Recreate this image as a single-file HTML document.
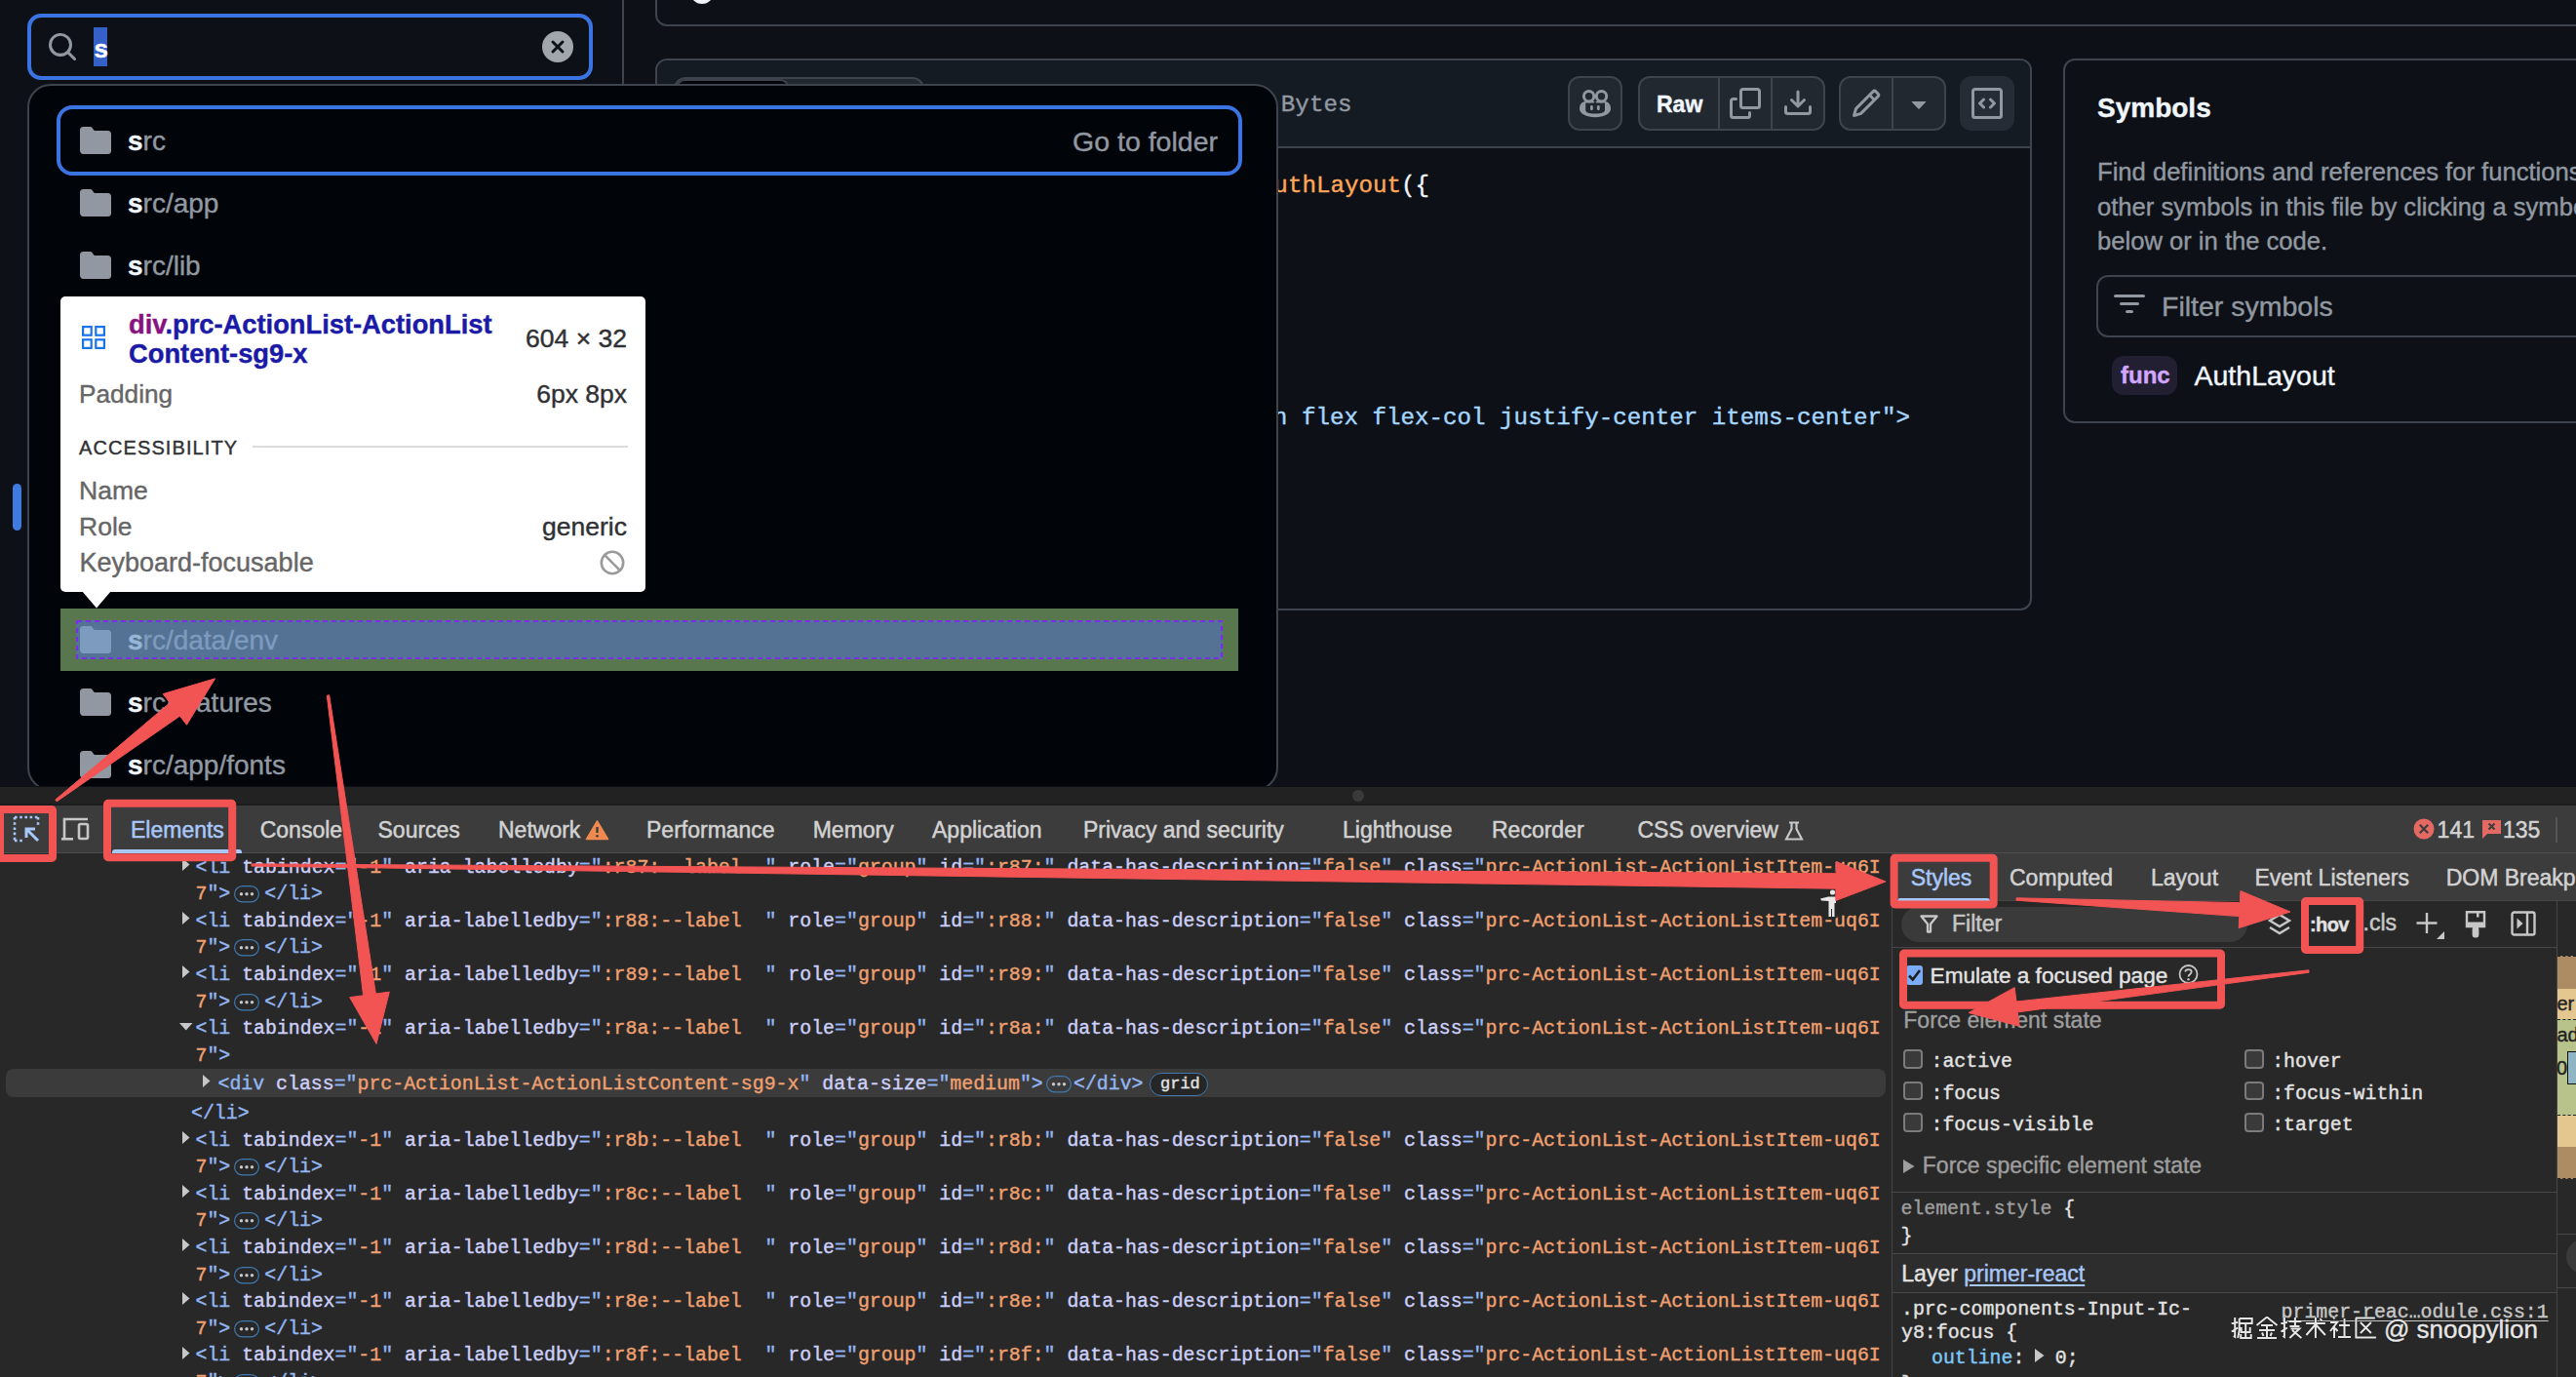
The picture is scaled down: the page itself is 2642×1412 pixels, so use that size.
<!DOCTYPE html>
<html><head><meta charset="utf-8"><title>DevTools</title>
<style>
*{box-sizing:border-box;margin:0;padding:0}
html,body{width:2642px;height:1412px;overflow:hidden;background:#0d1117}
body{position:relative;font-family:"Liberation Sans",sans-serif}
.a{position:absolute}
.t{position:absolute;white-space:pre;line-height:1;-webkit-text-stroke:0.4px currentColor}
svg{position:absolute;overflow:visible}
</style></head>
<body>
<div class="a" style="left:0;top:0;width:2642px;height:806px;background:#0d1117;overflow:hidden"><div class="a" style="left:638px;top:0;width:2px;height:806px;background:#3d444d"></div><div class="a" style="left:672px;top:-80px;width:2100px;height:107px;border:2px solid #3d444d;border-radius:12px"></div><div class="a" style="left:708px;top:-20px;width:24px;height:24px;border-radius:50%;background:#f0f6fc"></div><div class="a" style="left:672px;top:60px;width:1412px;height:566px;border:2px solid #3d444d;border-radius:12px;background:#0d1117;overflow:hidden"></div><div class="a" style="left:674px;top:62px;width:1408px;height:89px;background:#151b23;border-radius:10px 10px 0 0"></div><div class="a" style="left:674px;top:150px;width:1408px;height:2px;background:#3d444d"></div><div class="a" style="left:691px;top:79px;width:257px;height:56px;border:2px solid #3d444d;border-radius:12px;background:#212830"></div><div class="a" style="left:693px;top:81px;width:117px;height:52px;border-radius:10px;background:#010409;border:2px solid #3d444d"></div><div class="t" style="left:965.5px;top:96.1px;font-size:24.2px;color:#9198a1;font-weight:400;font-family:'Liberation Mono', monospace;">28 lines (25 loc) · 789 Bytes</div><div class="a" style="left:1608px;top:78px;width:56px;height:56px;border:2px solid #3d444d;border-radius:12px;background:#212830"></div><svg style="left:1619px;top:91px" width="34" height="30" viewBox="0 0 34 30">
<path fill="#9198a1" d="M1 20.5 C1 16 3.5 13.3 7 13 L27 13 C30.5 13.3 33 16 33 20.5 C33 25.6 26 29.2 17 29.2 C8 29.2 1 25.6 1 20.5 Z"/>
<path fill="#212830" d="M7.2 14.6 H15.5 L17 12.8 L18.5 14.6 H27 V21.5 C27 24 24.5 25.6 17 25.6 C9.5 25.6 7.2 24 7.2 21.5 Z"/>
<circle cx="10.6" cy="7.8" r="5.2" fill="none" stroke="#9198a1" stroke-width="3"/><circle cx="23.5" cy="7.8" r="5.2" fill="none" stroke="#9198a1" stroke-width="3"/>
<rect x="12" y="17.1" width="2.8" height="5.1" rx="1.4" fill="#9198a1"/><rect x="18.9" y="17.1" width="2.8" height="5.1" rx="1.4" fill="#9198a1"/>
</svg><div class="a" style="left:1680px;top:78px;width:192px;height:56px;border:2px solid #3d444d;border-radius:12px;background:#212830"></div><div class="a" style="left:1762px;top:80px;width:2px;height:52px;background:#3d444d"></div><div class="a" style="left:1816px;top:80px;width:2px;height:52px;background:#3d444d"></div><div class="t" style="left:1699.0px;top:96.1px;font-size:23px;color:#f0f6fc;font-weight:700;font-family:'Liberation Sans', sans-serif;">Raw</div><svg style="left:1774px;top:90px" width="32" height="32" viewBox="0 0 16 16"><path fill="#9198a1" d="M0 6.75C0 5.784.784 5 1.75 5h1.5a.75.75 0 0 1 0 1.5h-1.5a.25.25 0 0 0-.25.25v7.5c0 .138.112.25.25.25h7.5a.25.25 0 0 0 .25-.25v-1.5a.75.75 0 0 1 1.5 0v1.5A1.75 1.75 0 0 1 9.25 16h-7.5A1.75 1.75 0 0 1 0 14.25ZM5 1.75C5 .784 5.784 0 6.75 0h7.5C15.216 0 16 .784 16 1.75v7.5A1.75 1.75 0 0 1 14.25 11h-7.5A1.75 1.75 0 0 1 5 9.25Zm1.75-.25a.25.25 0 0 0-.25.25v7.5c0 .138.112.25.25.25h7.5a.25.25 0 0 0 .25-.25v-7.5a.25.25 0 0 0-.25-.25Z"/></svg><svg style="left:1828px;top:90px" width="32" height="32" viewBox="0 0 16 16"><path fill="#9198a1" d="M2.75 14A1.75 1.75 0 0 1 1 12.25v-2.5a.75.75 0 0 1 1.5 0v2.5c0 .138.112.25.25.25h10.5a.25.25 0 0 0 .25-.25v-2.5a.75.75 0 0 1 1.5 0v2.5A1.75 1.75 0 0 1 13.25 14ZM7.25 7.689V2a.75.75 0 0 1 1.5 0v5.689l1.97-1.969a.749.749 0 1 1 1.06 1.06l-3.25 3.25a.749.749 0 0 1-1.06 0L4.22 6.78a.749.749 0 1 1 1.06-1.06l1.97 1.969Z"/></svg><div class="a" style="left:1886px;top:78px;width:110px;height:56px;border:2px solid #3d444d;border-radius:12px;background:#212830"></div><div class="a" style="left:1940px;top:80px;width:2px;height:52px;background:#3d444d"></div><svg style="left:1898px;top:90px" width="32" height="32" viewBox="0 0 16 16"><path fill="#9198a1" d="M11.013 1.427a1.75 1.75 0 0 1 2.474 0l1.086 1.086a1.75 1.75 0 0 1 0 2.474l-8.61 8.61c-.21.21-.47.364-.756.445l-3.251.93a.75.75 0 0 1-.927-.928l.929-3.25c.081-.286.235-.547.445-.758l8.61-8.61Zm.176 4.823L9.75 4.81l-6.286 6.287a.253.253 0 0 0-.064.108l-.558 1.953 1.953-.558a.253.253 0 0 0 .108-.064Zm1.238-3.763a.25.25 0 0 0-.354 0L10.811 3.75l1.439 1.44 1.263-1.263a.25.25 0 0 0 0-.354Z"/></svg><svg style="left:1952px;top:90px" width="32" height="32" viewBox="0 0 16 16"><path fill="#9198a1" d="m4.427 7.427 3.396 3.396a.25.25 0 0 0 .354 0l3.396-3.396A.25.25 0 0 0 11.396 7H4.604a.25.25 0 0 0-.177.427Z"/></svg><div class="a" style="left:2010px;top:78px;width:56px;height:56px;border-radius:12px;background:#262c36"></div><svg style="left:2022px;top:90px" width="32" height="32" viewBox="0 0 16 16"><path fill="#9198a1" d="M0 1.75C0 .784.784 0 1.75 0h12.5C15.216 0 16 .784 16 1.75v12.5A1.75 1.75 0 0 1 14.25 16H1.75A1.75 1.75 0 0 1 0 14.25Zm1.75-.25a.25.25 0 0 0-.25.25v12.5c0 .138.112.25.25.25h12.5a.25.25 0 0 0 .25-.25V1.75a.25.25 0 0 0-.25-.25Zm7.47 3.97a.75.75 0 0 1 1.06 0l2 2a.75.75 0 0 1 0 1.06l-2 2a.749.749 0 0 1-1.275-.326.749.749 0 0 1 .215-.734L10.69 8 9.22 6.53a.75.75 0 0 1 0-1.06ZM6.78 6.53 5.31 8l1.47 1.47a.749.749 0 0 1-.326 1.275.749.749 0 0 1-.734-.215l-2-2a.75.75 0 0 1 0-1.06l2-2a.751.751 0 0 1 1.042.018.751.751 0 0 1 .018 1.042Z"/></svg><div class="t" style="left:943.5px;top:178.5px;font-size:24.2px;color:#f0f6fc;font-weight:400;font-family:'Liberation Mono', monospace;"><span style="color:#ff7b72;">export default function </span><span style="color:#ffa657;">AuthLayout</span><span style="color:#f0f6fc;">({</span></div><div class="t" style="left:855.9px;top:417.1px;font-size:24.2px;color:#f0f6fc;font-weight:400;font-family:'Liberation Mono', monospace;"><span style="color:#a5d6ff;">    &lt;div className="min-h-scree</span><span style="color:#a5d6ff;">n flex flex-col justify-center items-center"&gt;</span></div><div class="a" style="left:2116px;top:60px;width:700px;height:374px;border:2px solid #3d444d;border-radius:12px"></div><div class="t" style="left:2151.0px;top:97.3px;font-size:28px;color:#f0f6fc;font-weight:700;font-family:'Liberation Sans', sans-serif;">Symbols</div><div class="t" style="left:2151.0px;top:163.8px;font-size:25.6px;color:#9198a1;font-weight:400;font-family:'Liberation Sans', sans-serif;">Find definitions and references for functions and</div><div class="t" style="left:2151.0px;top:199.6px;font-size:25.6px;color:#9198a1;font-weight:400;font-family:'Liberation Sans', sans-serif;">other symbols in this file by clicking a symbol</div><div class="t" style="left:2151.0px;top:235.4px;font-size:25.6px;color:#9198a1;font-weight:400;font-family:'Liberation Sans', sans-serif;">below or in the code.</div><div class="a" style="left:2150px;top:282px;width:600px;height:64px;border:2px solid #3d444d;border-radius:12px"></div><svg style="left:2168px;top:296px" width="32" height="32" viewBox="0 0 16 16"><path fill="#9198a1" d="M.75 3h14.5a.75.75 0 0 1 0 1.5H.75a.75.75 0 0 1 0-1.5ZM3 7.75A.75.75 0 0 1 3.75 7h8.5a.75.75 0 0 1 0 1.5h-8.5A.75.75 0 0 1 3 7.75Zm3 4a.75.75 0 0 1 .75-.75h2.5a.75.75 0 0 1 0 1.5h-2.5a.75.75 0 0 1-.75-.75Z"/></svg><div class="t" style="left:2217.0px;top:300.4px;font-size:28.5px;color:#9198a1;font-weight:400;font-family:'Liberation Sans', sans-serif;">Filter symbols</div><div class="a" style="left:2166px;top:365px;width:67px;height:40px;border-radius:12px;background:#231f33"></div><div class="t" style="left:2175.0px;top:373.2px;font-size:24px;color:#d2a8ff;font-weight:700;font-family:'Liberation Sans', sans-serif;">func</div><div class="t" style="left:2250.5px;top:370.9px;font-size:28.5px;color:#f0f6fc;font-weight:400;font-family:'Liberation Sans', sans-serif;">AuthLayout</div><div class="a" style="left:28px;top:14px;width:580px;height:68px;border:4px solid #3a74e2;border-radius:14px;background:#0d1117"></div><svg style="left:48px;top:32px" width="32" height="32" viewBox="0 0 16 16"><path fill="#9198a1" d="M10.68 11.74a6 6 0 0 1-7.922-8.982 6 6 0 0 1 8.982 7.922l3.04 3.04a.749.749 0 0 1-.326 1.275.749.749 0 0 1-.734-.215ZM11.5 7a4.499 4.499 0 1 0-8.997 0A4.499 4.499 0 0 0 11.5 7Z"/></svg><div class="a" style="left:96px;top:28px;width:14px;height:40px;background:#3560c8"></div><div class="t" style="left:96.5px;top:37.0px;font-size:26px;color:#ffffff;font-weight:700;font-family:'Liberation Sans', sans-serif;">s</div><svg style="left:556px;top:32px" width="32" height="32" viewBox="0 0 32 32"><circle cx="16" cy="16" r="16" fill="#a1a6ad"/>
<path d="M11 11 L21 21 M21 11 L11 21" stroke="#0d1117" stroke-width="3" stroke-linecap="round"/></svg><div class="a" style="left:13px;top:496px;width:9px;height:48px;border-radius:5px;background:#3f7ae0"></div><div class="a" style="left:28px;top:86px;width:1283px;height:725px;border:2px solid #3d444d;border-radius:24px;background:#010409"></div><div class="a" style="left:58px;top:108px;width:1216px;height:72px;border:4px solid #3a74e2;border-radius:16px"></div><svg style="left:82px;top:128px" width="32" height="32" viewBox="0 0 16 16"><path fill="#9198a1" d="M1.75 1A1.75 1.75 0 0 0 0 2.75v10.5C0 14.216.784 15 1.75 15h12.5A1.75 1.75 0 0 0 16 13.25v-8.5A1.75 1.75 0 0 0 14.25 3H7.5a.25.25 0 0 1-.2-.1l-.9-1.2C6.07 1.26 5.55 1 5 1H1.75Z"/></svg><div class="t" style="left:131.0px;top:131.3px;font-size:28px;color:#9198a1;font-weight:400;font-family:'Liberation Sans', sans-serif;"><span style="color:#f0f6fc;font-weight:700">s</span><span style="color:#9198a1;">rc</span></div><svg style="left:82px;top:192px" width="32" height="32" viewBox="0 0 16 16"><path fill="#9198a1" d="M1.75 1A1.75 1.75 0 0 0 0 2.75v10.5C0 14.216.784 15 1.75 15h12.5A1.75 1.75 0 0 0 16 13.25v-8.5A1.75 1.75 0 0 0 14.25 3H7.5a.25.25 0 0 1-.2-.1l-.9-1.2C6.07 1.26 5.55 1 5 1H1.75Z"/></svg><div class="t" style="left:131.0px;top:195.3px;font-size:28px;color:#9198a1;font-weight:400;font-family:'Liberation Sans', sans-serif;"><span style="color:#f0f6fc;font-weight:700">s</span><span style="color:#9198a1;">rc/app</span></div><svg style="left:82px;top:256px" width="32" height="32" viewBox="0 0 16 16"><path fill="#9198a1" d="M1.75 1A1.75 1.75 0 0 0 0 2.75v10.5C0 14.216.784 15 1.75 15h12.5A1.75 1.75 0 0 0 16 13.25v-8.5A1.75 1.75 0 0 0 14.25 3H7.5a.25.25 0 0 1-.2-.1l-.9-1.2C6.07 1.26 5.55 1 5 1H1.75Z"/></svg><div class="t" style="left:131.0px;top:259.3px;font-size:28px;color:#9198a1;font-weight:400;font-family:'Liberation Sans', sans-serif;"><span style="color:#f0f6fc;font-weight:700">s</span><span style="color:#9198a1;">rc/lib</span></div><svg style="left:82px;top:320px" width="32" height="32" viewBox="0 0 16 16"><path fill="#9198a1" d="M1.75 1A1.75 1.75 0 0 0 0 2.75v10.5C0 14.216.784 15 1.75 15h12.5A1.75 1.75 0 0 0 16 13.25v-8.5A1.75 1.75 0 0 0 14.25 3H7.5a.25.25 0 0 1-.2-.1l-.9-1.2C6.07 1.26 5.55 1 5 1H1.75Z"/></svg><div class="t" style="left:131.0px;top:323.3px;font-size:28px;color:#9198a1;font-weight:400;font-family:'Liberation Sans', sans-serif;"><span style="color:#f0f6fc;font-weight:700">s</span><span style="color:#9198a1;">rc/components</span></div><svg style="left:82px;top:384px" width="32" height="32" viewBox="0 0 16 16"><path fill="#9198a1" d="M1.75 1A1.75 1.75 0 0 0 0 2.75v10.5C0 14.216.784 15 1.75 15h12.5A1.75 1.75 0 0 0 16 13.25v-8.5A1.75 1.75 0 0 0 14.25 3H7.5a.25.25 0 0 1-.2-.1l-.9-1.2C6.07 1.26 5.55 1 5 1H1.75Z"/></svg><div class="t" style="left:131.0px;top:387.3px;font-size:28px;color:#9198a1;font-weight:400;font-family:'Liberation Sans', sans-serif;"><span style="color:#f0f6fc;font-weight:700">s</span><span style="color:#9198a1;">rc/hooks</span></div><svg style="left:82px;top:448px" width="32" height="32" viewBox="0 0 16 16"><path fill="#9198a1" d="M1.75 1A1.75 1.75 0 0 0 0 2.75v10.5C0 14.216.784 15 1.75 15h12.5A1.75 1.75 0 0 0 16 13.25v-8.5A1.75 1.75 0 0 0 14.25 3H7.5a.25.25 0 0 1-.2-.1l-.9-1.2C6.07 1.26 5.55 1 5 1H1.75Z"/></svg><div class="t" style="left:131.0px;top:451.3px;font-size:28px;color:#9198a1;font-weight:400;font-family:'Liberation Sans', sans-serif;"><span style="color:#f0f6fc;font-weight:700">s</span><span style="color:#9198a1;">rc/data</span></div><svg style="left:82px;top:512px" width="32" height="32" viewBox="0 0 16 16"><path fill="#9198a1" d="M1.75 1A1.75 1.75 0 0 0 0 2.75v10.5C0 14.216.784 15 1.75 15h12.5A1.75 1.75 0 0 0 16 13.25v-8.5A1.75 1.75 0 0 0 14.25 3H7.5a.25.25 0 0 1-.2-.1l-.9-1.2C6.07 1.26 5.55 1 5 1H1.75Z"/></svg><div class="t" style="left:131.0px;top:515.3px;font-size:28px;color:#9198a1;font-weight:400;font-family:'Liberation Sans', sans-serif;"><span style="color:#f0f6fc;font-weight:700">s</span><span style="color:#9198a1;">rc/styles</span></div><svg style="left:82px;top:576px" width="32" height="32" viewBox="0 0 16 16"><path fill="#9198a1" d="M1.75 1A1.75 1.75 0 0 0 0 2.75v10.5C0 14.216.784 15 1.75 15h12.5A1.75 1.75 0 0 0 16 13.25v-8.5A1.75 1.75 0 0 0 14.25 3H7.5a.25.25 0 0 1-.2-.1l-.9-1.2C6.07 1.26 5.55 1 5 1H1.75Z"/></svg><div class="t" style="left:131.0px;top:579.3px;font-size:28px;color:#9198a1;font-weight:400;font-family:'Liberation Sans', sans-serif;"><span style="color:#f0f6fc;font-weight:700">s</span><span style="color:#9198a1;">rc/utils</span></div><svg style="left:82px;top:640px" width="32" height="32" viewBox="0 0 16 16"><path fill="#9198a1" d="M1.75 1A1.75 1.75 0 0 0 0 2.75v10.5C0 14.216.784 15 1.75 15h12.5A1.75 1.75 0 0 0 16 13.25v-8.5A1.75 1.75 0 0 0 14.25 3H7.5a.25.25 0 0 1-.2-.1l-.9-1.2C6.07 1.26 5.55 1 5 1H1.75Z"/></svg><div class="t" style="left:131.0px;top:643.3px;font-size:28px;color:#9198a1;font-weight:400;font-family:'Liberation Sans', sans-serif;"><span style="color:#f0f6fc;font-weight:700">s</span><span style="color:#9198a1;">rc/data/env</span></div><svg style="left:82px;top:704px" width="32" height="32" viewBox="0 0 16 16"><path fill="#9198a1" d="M1.75 1A1.75 1.75 0 0 0 0 2.75v10.5C0 14.216.784 15 1.75 15h12.5A1.75 1.75 0 0 0 16 13.25v-8.5A1.75 1.75 0 0 0 14.25 3H7.5a.25.25 0 0 1-.2-.1l-.9-1.2C6.07 1.26 5.55 1 5 1H1.75Z"/></svg><div class="t" style="left:131.0px;top:707.3px;font-size:28px;color:#9198a1;font-weight:400;font-family:'Liberation Sans', sans-serif;"><span style="color:#f0f6fc;font-weight:700">s</span><span style="color:#9198a1;">rc/features</span></div><svg style="left:82px;top:768px" width="32" height="32" viewBox="0 0 16 16"><path fill="#9198a1" d="M1.75 1A1.75 1.75 0 0 0 0 2.75v10.5C0 14.216.784 15 1.75 15h12.5A1.75 1.75 0 0 0 16 13.25v-8.5A1.75 1.75 0 0 0 14.25 3H7.5a.25.25 0 0 1-.2-.1l-.9-1.2C6.07 1.26 5.55 1 5 1H1.75Z"/></svg><div class="t" style="left:131.0px;top:771.3px;font-size:28px;color:#9198a1;font-weight:400;font-family:'Liberation Sans', sans-serif;"><span style="color:#f0f6fc;font-weight:700">s</span><span style="color:#9198a1;">rc/app/fonts</span></div><div class="t" style="right:1393.0px;top:130.9px;font-size:28.5px;color:#9198a1;font-weight:400;font-family:'Liberation Sans', sans-serif;">Go to folder</div><div class="a" style="left:62px;top:624px;width:1208px;height:64px;border-style:solid;border-width:12px 16px;border-color:rgba(147,196,125,0.6)"></div><div class="a" style="left:78px;top:636px;width:1176px;height:40px;background:rgba(117,156,201,0.72)"></div><svg style="left:78px;top:636px" width="1176" height="40"><rect x="1" y="1" width="1174" height="38" fill="none" stroke="#7a2cf0" stroke-width="2.2" stroke-dasharray="5 4"/></svg><div class="a" style="left:62px;top:304px;width:600px;height:303px;background:#ffffff;border-radius:5px;box-shadow:0 1px 4px rgba(0,0,0,.3)"></div><svg style="left:84px;top:606px" width="30" height="18"><path d="M0 0 L30 0 L15 17.5 Z" fill="#ffffff"/></svg><svg style="left:84px;top:334px" width="24" height="24" viewBox="0 0 24 24" fill="none" stroke="#1a73e8" stroke-width="2.2">
<rect x="1.1" y="1.1" width="8.6" height="8.6"/><rect x="14.3" y="1.1" width="8.6" height="8.6"/><rect x="1.1" y="14.3" width="8.6" height="8.6"/><rect x="14.3" y="14.3" width="8.6" height="8.6"/></svg><div class="t" style="left:132.0px;top:318.9px;font-size:27.3px;color:#1a1aa6;font-weight:700;font-family:'Liberation Sans', sans-serif;"><span style="color:#881280;">div</span><span style="color:#1a1aa6;">.prc-ActionList-ActionList</span></div><div class="t" style="left:132.0px;top:348.5px;font-size:27.3px;color:#1a1aa6;font-weight:700;font-family:'Liberation Sans', sans-serif;">Content-sg9-x</div><div class="t" style="right:1999.0px;top:334.4px;font-size:26.5px;color:#303134;font-weight:400;font-family:'Liberation Sans', sans-serif;">604 × 32</div><div class="t" style="left:81.0px;top:391.4px;font-size:26.2px;color:#666666;font-weight:400;font-family:'Liberation Sans', sans-serif;">Padding</div><div class="t" style="right:1999.0px;top:391.2px;font-size:26.5px;color:#303134;font-weight:400;font-family:'Liberation Sans', sans-serif;">6px 8px</div><div class="t" style="left:81.0px;top:448.8px;font-size:20px;color:#303134;font-weight:400;font-family:'Liberation Sans', sans-serif;letter-spacing:1.1px;">ACCESSIBILITY</div><div class="a" style="left:259px;top:457px;width:385px;height:2px;background:#dadce0"></div><div class="t" style="left:81.0px;top:489.5px;font-size:26.5px;color:#666666;font-weight:400;font-family:'Liberation Sans', sans-serif;">Name</div><div class="t" style="left:81.0px;top:527.4px;font-size:26.5px;color:#666666;font-weight:400;font-family:'Liberation Sans', sans-serif;">Role</div><div class="t" style="right:1999.0px;top:527.3px;font-size:26.5px;color:#303134;font-weight:400;font-family:'Liberation Sans', sans-serif;">generic</div><div class="t" style="left:81.5px;top:564.1px;font-size:27px;color:#666666;font-weight:400;font-family:'Liberation Sans', sans-serif;">Keyboard-focusable</div><svg style="left:615px;top:564px" width="26" height="26" viewBox="0 0 26 26" fill="none" stroke="#9a9a9a" stroke-width="2.6">
<circle cx="13" cy="13" r="11.2"/><path d="M5.2 5.2 L20.8 20.8"/></svg></div><div class="a" style="left:0;top:807px;width:2642px;height:605px;background:#282828"></div><div class="a" style="left:0;top:807px;width:2642px;height:17px;background:#222222"></div><div class="a" style="left:0;top:824px;width:2642px;height:2px;background:#1c1c1c"></div><div class="a" style="left:1387px;top:810px;width:12px;height:12px;border-radius:50%;background:#3a3a3a"></div><div class="a" style="left:0;top:826px;width:2642px;height:49px;background:#3c3c3c;border-bottom:1px solid #4d4d4d"></div><svg style="left:12px;top:835px" width="30" height="30" viewBox="0 0 30 30" fill="none" stroke="#a8c7fa" stroke-width="2.6">
<path d="M3 3 H27 M3 3 V27 M27 3 V13 M3 27 H13" stroke-dasharray="2.6 2.6"/>
<path d="M27 27 L15.5 15.5 M15 24 V15 H24" stroke-width="3"/></svg><svg style="left:62px;top:838px" width="30" height="24" viewBox="0 0 30 24" fill="none" stroke="#c7c7c7" stroke-width="2.6">
<path d="M4 22 V2 H28"/><path d="M1 22.3 H13"/><rect x="19" y="7" width="9" height="15" rx="1.5"/></svg><div class="t" style="left:134.0px;top:840.0px;font-size:23px;color:#a8c7fa;font-weight:400;font-family:'Liberation Sans', sans-serif;-webkit-text-stroke:0.5px currentColor;">Elements</div><div class="a" style="left:115px;top:871px;width:133px;height:4px;background:#a8c7fa;border-radius:3px 3px 0 0"></div><div class="t" style="left:266.7px;top:840.0px;font-size:23px;color:#d2d2d2;font-weight:400;font-family:'Liberation Sans', sans-serif;-webkit-text-stroke:0.5px currentColor;">Console</div><div class="t" style="left:387.5px;top:840.0px;font-size:23px;color:#d2d2d2;font-weight:400;font-family:'Liberation Sans', sans-serif;-webkit-text-stroke:0.5px currentColor;">Sources</div><div class="t" style="left:511.0px;top:840.0px;font-size:23px;color:#d2d2d2;font-weight:400;font-family:'Liberation Sans', sans-serif;-webkit-text-stroke:0.5px currentColor;">Network</div><div class="t" style="left:663.0px;top:840.0px;font-size:23px;color:#d2d2d2;font-weight:400;font-family:'Liberation Sans', sans-serif;-webkit-text-stroke:0.5px currentColor;">Performance</div><div class="t" style="left:833.7px;top:840.0px;font-size:23px;color:#d2d2d2;font-weight:400;font-family:'Liberation Sans', sans-serif;-webkit-text-stroke:0.5px currentColor;">Memory</div><div class="t" style="left:956.0px;top:840.0px;font-size:23px;color:#d2d2d2;font-weight:400;font-family:'Liberation Sans', sans-serif;-webkit-text-stroke:0.5px currentColor;">Application</div><div class="t" style="left:1111.0px;top:840.0px;font-size:23px;color:#d2d2d2;font-weight:400;font-family:'Liberation Sans', sans-serif;-webkit-text-stroke:0.5px currentColor;">Privacy and security</div><div class="t" style="left:1377.0px;top:840.0px;font-size:23px;color:#d2d2d2;font-weight:400;font-family:'Liberation Sans', sans-serif;-webkit-text-stroke:0.5px currentColor;">Lighthouse</div><div class="t" style="left:1530.0px;top:840.0px;font-size:23px;color:#d2d2d2;font-weight:400;font-family:'Liberation Sans', sans-serif;-webkit-text-stroke:0.5px currentColor;">Recorder</div><div class="t" style="left:1679.5px;top:840.0px;font-size:23px;color:#d2d2d2;font-weight:400;font-family:'Liberation Sans', sans-serif;-webkit-text-stroke:0.5px currentColor;">CSS overview</div><svg style="left:601px;top:841px" width="23" height="20" viewBox="0 0 23 20"><path d="M11.5 1 L22.5 19.5 H0.5 Z" fill="#ee8a50" stroke="#ee8a50" stroke-width="1.5" stroke-linejoin="round"/><path d="M11.5 7 V13" stroke="#3c3c3c" stroke-width="2.4"/><circle cx="11.5" cy="16.3" r="1.3" fill="#3c3c3c"/></svg><svg style="left:1830px;top:842px" width="20" height="20" viewBox="0 0 20 20" fill="none" stroke="#c7c7c7" stroke-width="2.2"><path d="M5 1.5 H15 M7.5 1.5 V8 L2 18.5 H18 L12.5 8 V1.5"/></svg><svg style="left:2475px;top:839px" width="22" height="22" viewBox="0 0 22 22"><circle cx="11" cy="11" r="10.5" fill="#e46962"/><path d="M6.8 6.8 L15.2 15.2 M15.2 6.8 L6.8 15.2" stroke="#3c3c3c" stroke-width="2.2"/></svg><div class="t" style="left:2499.6px;top:840.0px;font-size:23px;color:#d2d2d2;font-weight:400;font-family:'Liberation Sans', sans-serif;-webkit-text-stroke:0.5px currentColor;">141</div><svg style="left:2545px;top:840px" width="21" height="21" viewBox="0 0 21 21"><path d="M1 1 H20 V15 H6 L1 20 Z" fill="#e46962"/><path d="M7.5 4.5 L13.5 10.5 M13.5 4.5 L7.5 10.5" stroke="#3c3c3c" stroke-width="2"/></svg><div class="t" style="left:2567.0px;top:840.0px;font-size:23px;color:#d2d2d2;font-weight:400;font-family:'Liberation Sans', sans-serif;-webkit-text-stroke:0.5px currentColor;">135</div><div class="a" style="left:2621px;top:838px;width:2px;height:26px;background:#555"></div><div class="a" style="left:6px;top:1096px;width:1928px;height:28.5px;background:#3b3b3b;border-radius:8px"></div><svg style="left:186.5px;top:879.8px" width="8" height="13" viewBox="0 0 8 13"><path d="M0 0 L7.5 6.5 L0 13 Z" fill="#c7c7c7"/></svg><div class="t" style="left:200.5px;top:879.6px;font-size:19.87px;color:#93b6f2;font-weight:400;font-family:'Liberation Mono', monospace;"><span style="color:#93b6f2;">&lt;li </span><span style="color:#cdd0fa;">tabindex</span><span style="color:#93b6f2;">="</span><span style="color:#f0a070;">-1</span><span style="color:#93b6f2;">" </span><span style="color:#cdd0fa;">aria-labelledby</span><span style="color:#93b6f2;">="</span><span style="color:#f0a070;">:r87:--label  </span><span style="color:#93b6f2;">" </span><span style="color:#cdd0fa;">role</span><span style="color:#93b6f2;">="</span><span style="color:#f0a070;">group</span><span style="color:#93b6f2;">" </span><span style="color:#cdd0fa;">id</span><span style="color:#93b6f2;">="</span><span style="color:#f0a070;">:r87:</span><span style="color:#93b6f2;">" </span><span style="color:#cdd0fa;">data-has-description</span><span style="color:#93b6f2;">="</span><span style="color:#f0a070;">false</span><span style="color:#93b6f2;">" </span><span style="color:#cdd0fa;">class</span><span style="color:#93b6f2;">="</span><span style="color:#f0a070;">prc-ActionList-ActionListItem-uq6I</span></div><div class="t" style="left:200.5px;top:907.2px;font-size:19.87px;color:#93b6f2;font-weight:400;font-family:'Liberation Mono', monospace;"><span style="color:#f0a070;">7</span><span style="color:#93b6f2;">"&gt;</span></div><svg style="left:240.26600000000002px;top:908.1999999999999px" width="26" height="17.5" viewBox="0 0 26 17.5"><rect x="0.6" y="0.6" width="24.8" height="16.3" rx="8.15" fill="none" stroke="#3f79b0" stroke-width="1.2"/><circle cx="7.5" cy="8.75" r="1.7" fill="#c7c7c7"/><circle cx="13.0" cy="8.75" r="1.7" fill="#c7c7c7"/><circle cx="18.5" cy="8.75" r="1.7" fill="#c7c7c7"/></svg><div class="t" style="left:271.3px;top:907.2px;font-size:19.87px;color:#93b6f2;font-weight:400;font-family:'Liberation Mono', monospace;"><span style="color:#93b6f2;">&lt;/li&gt;</span></div><svg style="left:186.5px;top:935.0px" width="8" height="13" viewBox="0 0 8 13"><path d="M0 0 L7.5 6.5 L0 13 Z" fill="#c7c7c7"/></svg><div class="t" style="left:200.5px;top:934.8px;font-size:19.87px;color:#93b6f2;font-weight:400;font-family:'Liberation Mono', monospace;"><span style="color:#93b6f2;">&lt;li </span><span style="color:#cdd0fa;">tabindex</span><span style="color:#93b6f2;">="</span><span style="color:#f0a070;">-1</span><span style="color:#93b6f2;">" </span><span style="color:#cdd0fa;">aria-labelledby</span><span style="color:#93b6f2;">="</span><span style="color:#f0a070;">:r88:--label  </span><span style="color:#93b6f2;">" </span><span style="color:#cdd0fa;">role</span><span style="color:#93b6f2;">="</span><span style="color:#f0a070;">group</span><span style="color:#93b6f2;">" </span><span style="color:#cdd0fa;">id</span><span style="color:#93b6f2;">="</span><span style="color:#f0a070;">:r88:</span><span style="color:#93b6f2;">" </span><span style="color:#cdd0fa;">data-has-description</span><span style="color:#93b6f2;">="</span><span style="color:#f0a070;">false</span><span style="color:#93b6f2;">" </span><span style="color:#cdd0fa;">class</span><span style="color:#93b6f2;">="</span><span style="color:#f0a070;">prc-ActionList-ActionListItem-uq6I</span></div><div class="t" style="left:200.5px;top:962.4px;font-size:19.87px;color:#93b6f2;font-weight:400;font-family:'Liberation Mono', monospace;"><span style="color:#f0a070;">7</span><span style="color:#93b6f2;">"&gt;</span></div><svg style="left:240.26600000000002px;top:963.3999999999999px" width="26" height="17.5" viewBox="0 0 26 17.5"><rect x="0.6" y="0.6" width="24.8" height="16.3" rx="8.15" fill="none" stroke="#3f79b0" stroke-width="1.2"/><circle cx="7.5" cy="8.75" r="1.7" fill="#c7c7c7"/><circle cx="13.0" cy="8.75" r="1.7" fill="#c7c7c7"/><circle cx="18.5" cy="8.75" r="1.7" fill="#c7c7c7"/></svg><div class="t" style="left:271.3px;top:962.4px;font-size:19.87px;color:#93b6f2;font-weight:400;font-family:'Liberation Mono', monospace;"><span style="color:#93b6f2;">&lt;/li&gt;</span></div><svg style="left:186.5px;top:990.1999999999999px" width="8" height="13" viewBox="0 0 8 13"><path d="M0 0 L7.5 6.5 L0 13 Z" fill="#c7c7c7"/></svg><div class="t" style="left:200.5px;top:990.0px;font-size:19.87px;color:#93b6f2;font-weight:400;font-family:'Liberation Mono', monospace;"><span style="color:#93b6f2;">&lt;li </span><span style="color:#cdd0fa;">tabindex</span><span style="color:#93b6f2;">="</span><span style="color:#f0a070;">-1</span><span style="color:#93b6f2;">" </span><span style="color:#cdd0fa;">aria-labelledby</span><span style="color:#93b6f2;">="</span><span style="color:#f0a070;">:r89:--label  </span><span style="color:#93b6f2;">" </span><span style="color:#cdd0fa;">role</span><span style="color:#93b6f2;">="</span><span style="color:#f0a070;">group</span><span style="color:#93b6f2;">" </span><span style="color:#cdd0fa;">id</span><span style="color:#93b6f2;">="</span><span style="color:#f0a070;">:r89:</span><span style="color:#93b6f2;">" </span><span style="color:#cdd0fa;">data-has-description</span><span style="color:#93b6f2;">="</span><span style="color:#f0a070;">false</span><span style="color:#93b6f2;">" </span><span style="color:#cdd0fa;">class</span><span style="color:#93b6f2;">="</span><span style="color:#f0a070;">prc-ActionList-ActionListItem-uq6I</span></div><div class="t" style="left:200.5px;top:1017.6px;font-size:19.87px;color:#93b6f2;font-weight:400;font-family:'Liberation Mono', monospace;"><span style="color:#f0a070;">7</span><span style="color:#93b6f2;">"&gt;</span></div><svg style="left:240.26600000000002px;top:1018.5999999999999px" width="26" height="17.5" viewBox="0 0 26 17.5"><rect x="0.6" y="0.6" width="24.8" height="16.3" rx="8.15" fill="none" stroke="#3f79b0" stroke-width="1.2"/><circle cx="7.5" cy="8.75" r="1.7" fill="#c7c7c7"/><circle cx="13.0" cy="8.75" r="1.7" fill="#c7c7c7"/><circle cx="18.5" cy="8.75" r="1.7" fill="#c7c7c7"/></svg><div class="t" style="left:271.3px;top:1017.6px;font-size:19.87px;color:#93b6f2;font-weight:400;font-family:'Liberation Mono', monospace;"><span style="color:#93b6f2;">&lt;/li&gt;</span></div><svg style="left:186.5px;top:1159.8px" width="8" height="13" viewBox="0 0 8 13"><path d="M0 0 L7.5 6.5 L0 13 Z" fill="#c7c7c7"/></svg><div class="t" style="left:200.5px;top:1159.6px;font-size:19.87px;color:#93b6f2;font-weight:400;font-family:'Liberation Mono', monospace;"><span style="color:#93b6f2;">&lt;li </span><span style="color:#cdd0fa;">tabindex</span><span style="color:#93b6f2;">="</span><span style="color:#f0a070;">-1</span><span style="color:#93b6f2;">" </span><span style="color:#cdd0fa;">aria-labelledby</span><span style="color:#93b6f2;">="</span><span style="color:#f0a070;">:r8b:--label  </span><span style="color:#93b6f2;">" </span><span style="color:#cdd0fa;">role</span><span style="color:#93b6f2;">="</span><span style="color:#f0a070;">group</span><span style="color:#93b6f2;">" </span><span style="color:#cdd0fa;">id</span><span style="color:#93b6f2;">="</span><span style="color:#f0a070;">:r8b:</span><span style="color:#93b6f2;">" </span><span style="color:#cdd0fa;">data-has-description</span><span style="color:#93b6f2;">="</span><span style="color:#f0a070;">false</span><span style="color:#93b6f2;">" </span><span style="color:#cdd0fa;">class</span><span style="color:#93b6f2;">="</span><span style="color:#f0a070;">prc-ActionList-ActionListItem-uq6I</span></div><div class="t" style="left:200.5px;top:1187.2px;font-size:19.87px;color:#93b6f2;font-weight:400;font-family:'Liberation Mono', monospace;"><span style="color:#f0a070;">7</span><span style="color:#93b6f2;">"&gt;</span></div><svg style="left:240.26600000000002px;top:1188.2px" width="26" height="17.5" viewBox="0 0 26 17.5"><rect x="0.6" y="0.6" width="24.8" height="16.3" rx="8.15" fill="none" stroke="#3f79b0" stroke-width="1.2"/><circle cx="7.5" cy="8.75" r="1.7" fill="#c7c7c7"/><circle cx="13.0" cy="8.75" r="1.7" fill="#c7c7c7"/><circle cx="18.5" cy="8.75" r="1.7" fill="#c7c7c7"/></svg><div class="t" style="left:271.3px;top:1187.2px;font-size:19.87px;color:#93b6f2;font-weight:400;font-family:'Liberation Mono', monospace;"><span style="color:#93b6f2;">&lt;/li&gt;</span></div><svg style="left:186.5px;top:1215.0px" width="8" height="13" viewBox="0 0 8 13"><path d="M0 0 L7.5 6.5 L0 13 Z" fill="#c7c7c7"/></svg><div class="t" style="left:200.5px;top:1214.8px;font-size:19.87px;color:#93b6f2;font-weight:400;font-family:'Liberation Mono', monospace;"><span style="color:#93b6f2;">&lt;li </span><span style="color:#cdd0fa;">tabindex</span><span style="color:#93b6f2;">="</span><span style="color:#f0a070;">-1</span><span style="color:#93b6f2;">" </span><span style="color:#cdd0fa;">aria-labelledby</span><span style="color:#93b6f2;">="</span><span style="color:#f0a070;">:r8c:--label  </span><span style="color:#93b6f2;">" </span><span style="color:#cdd0fa;">role</span><span style="color:#93b6f2;">="</span><span style="color:#f0a070;">group</span><span style="color:#93b6f2;">" </span><span style="color:#cdd0fa;">id</span><span style="color:#93b6f2;">="</span><span style="color:#f0a070;">:r8c:</span><span style="color:#93b6f2;">" </span><span style="color:#cdd0fa;">data-has-description</span><span style="color:#93b6f2;">="</span><span style="color:#f0a070;">false</span><span style="color:#93b6f2;">" </span><span style="color:#cdd0fa;">class</span><span style="color:#93b6f2;">="</span><span style="color:#f0a070;">prc-ActionList-ActionListItem-uq6I</span></div><div class="t" style="left:200.5px;top:1242.4px;font-size:19.87px;color:#93b6f2;font-weight:400;font-family:'Liberation Mono', monospace;"><span style="color:#f0a070;">7</span><span style="color:#93b6f2;">"&gt;</span></div><svg style="left:240.26600000000002px;top:1243.3999999999999px" width="26" height="17.5" viewBox="0 0 26 17.5"><rect x="0.6" y="0.6" width="24.8" height="16.3" rx="8.15" fill="none" stroke="#3f79b0" stroke-width="1.2"/><circle cx="7.5" cy="8.75" r="1.7" fill="#c7c7c7"/><circle cx="13.0" cy="8.75" r="1.7" fill="#c7c7c7"/><circle cx="18.5" cy="8.75" r="1.7" fill="#c7c7c7"/></svg><div class="t" style="left:271.3px;top:1242.4px;font-size:19.87px;color:#93b6f2;font-weight:400;font-family:'Liberation Mono', monospace;"><span style="color:#93b6f2;">&lt;/li&gt;</span></div><svg style="left:186.5px;top:1270.2px" width="8" height="13" viewBox="0 0 8 13"><path d="M0 0 L7.5 6.5 L0 13 Z" fill="#c7c7c7"/></svg><div class="t" style="left:200.5px;top:1270.0px;font-size:19.87px;color:#93b6f2;font-weight:400;font-family:'Liberation Mono', monospace;"><span style="color:#93b6f2;">&lt;li </span><span style="color:#cdd0fa;">tabindex</span><span style="color:#93b6f2;">="</span><span style="color:#f0a070;">-1</span><span style="color:#93b6f2;">" </span><span style="color:#cdd0fa;">aria-labelledby</span><span style="color:#93b6f2;">="</span><span style="color:#f0a070;">:r8d:--label  </span><span style="color:#93b6f2;">" </span><span style="color:#cdd0fa;">role</span><span style="color:#93b6f2;">="</span><span style="color:#f0a070;">group</span><span style="color:#93b6f2;">" </span><span style="color:#cdd0fa;">id</span><span style="color:#93b6f2;">="</span><span style="color:#f0a070;">:r8d:</span><span style="color:#93b6f2;">" </span><span style="color:#cdd0fa;">data-has-description</span><span style="color:#93b6f2;">="</span><span style="color:#f0a070;">false</span><span style="color:#93b6f2;">" </span><span style="color:#cdd0fa;">class</span><span style="color:#93b6f2;">="</span><span style="color:#f0a070;">prc-ActionList-ActionListItem-uq6I</span></div><div class="t" style="left:200.5px;top:1297.6px;font-size:19.87px;color:#93b6f2;font-weight:400;font-family:'Liberation Mono', monospace;"><span style="color:#f0a070;">7</span><span style="color:#93b6f2;">"&gt;</span></div><svg style="left:240.26600000000002px;top:1298.6px" width="26" height="17.5" viewBox="0 0 26 17.5"><rect x="0.6" y="0.6" width="24.8" height="16.3" rx="8.15" fill="none" stroke="#3f79b0" stroke-width="1.2"/><circle cx="7.5" cy="8.75" r="1.7" fill="#c7c7c7"/><circle cx="13.0" cy="8.75" r="1.7" fill="#c7c7c7"/><circle cx="18.5" cy="8.75" r="1.7" fill="#c7c7c7"/></svg><div class="t" style="left:271.3px;top:1297.6px;font-size:19.87px;color:#93b6f2;font-weight:400;font-family:'Liberation Mono', monospace;"><span style="color:#93b6f2;">&lt;/li&gt;</span></div><svg style="left:186.5px;top:1325.4px" width="8" height="13" viewBox="0 0 8 13"><path d="M0 0 L7.5 6.5 L0 13 Z" fill="#c7c7c7"/></svg><div class="t" style="left:200.5px;top:1325.2px;font-size:19.87px;color:#93b6f2;font-weight:400;font-family:'Liberation Mono', monospace;"><span style="color:#93b6f2;">&lt;li </span><span style="color:#cdd0fa;">tabindex</span><span style="color:#93b6f2;">="</span><span style="color:#f0a070;">-1</span><span style="color:#93b6f2;">" </span><span style="color:#cdd0fa;">aria-labelledby</span><span style="color:#93b6f2;">="</span><span style="color:#f0a070;">:r8e:--label  </span><span style="color:#93b6f2;">" </span><span style="color:#cdd0fa;">role</span><span style="color:#93b6f2;">="</span><span style="color:#f0a070;">group</span><span style="color:#93b6f2;">" </span><span style="color:#cdd0fa;">id</span><span style="color:#93b6f2;">="</span><span style="color:#f0a070;">:r8e:</span><span style="color:#93b6f2;">" </span><span style="color:#cdd0fa;">data-has-description</span><span style="color:#93b6f2;">="</span><span style="color:#f0a070;">false</span><span style="color:#93b6f2;">" </span><span style="color:#cdd0fa;">class</span><span style="color:#93b6f2;">="</span><span style="color:#f0a070;">prc-ActionList-ActionListItem-uq6I</span></div><div class="t" style="left:200.5px;top:1352.8px;font-size:19.87px;color:#93b6f2;font-weight:400;font-family:'Liberation Mono', monospace;"><span style="color:#f0a070;">7</span><span style="color:#93b6f2;">"&gt;</span></div><svg style="left:240.26600000000002px;top:1353.8px" width="26" height="17.5" viewBox="0 0 26 17.5"><rect x="0.6" y="0.6" width="24.8" height="16.3" rx="8.15" fill="none" stroke="#3f79b0" stroke-width="1.2"/><circle cx="7.5" cy="8.75" r="1.7" fill="#c7c7c7"/><circle cx="13.0" cy="8.75" r="1.7" fill="#c7c7c7"/><circle cx="18.5" cy="8.75" r="1.7" fill="#c7c7c7"/></svg><div class="t" style="left:271.3px;top:1352.8px;font-size:19.87px;color:#93b6f2;font-weight:400;font-family:'Liberation Mono', monospace;"><span style="color:#93b6f2;">&lt;/li&gt;</span></div><svg style="left:186.5px;top:1380.6px" width="8" height="13" viewBox="0 0 8 13"><path d="M0 0 L7.5 6.5 L0 13 Z" fill="#c7c7c7"/></svg><div class="t" style="left:200.5px;top:1380.4px;font-size:19.87px;color:#93b6f2;font-weight:400;font-family:'Liberation Mono', monospace;"><span style="color:#93b6f2;">&lt;li </span><span style="color:#cdd0fa;">tabindex</span><span style="color:#93b6f2;">="</span><span style="color:#f0a070;">-1</span><span style="color:#93b6f2;">" </span><span style="color:#cdd0fa;">aria-labelledby</span><span style="color:#93b6f2;">="</span><span style="color:#f0a070;">:r8f:--label  </span><span style="color:#93b6f2;">" </span><span style="color:#cdd0fa;">role</span><span style="color:#93b6f2;">="</span><span style="color:#f0a070;">group</span><span style="color:#93b6f2;">" </span><span style="color:#cdd0fa;">id</span><span style="color:#93b6f2;">="</span><span style="color:#f0a070;">:r8f:</span><span style="color:#93b6f2;">" </span><span style="color:#cdd0fa;">data-has-description</span><span style="color:#93b6f2;">="</span><span style="color:#f0a070;">false</span><span style="color:#93b6f2;">" </span><span style="color:#cdd0fa;">class</span><span style="color:#93b6f2;">="</span><span style="color:#f0a070;">prc-ActionList-ActionListItem-uq6I</span></div><div class="t" style="left:200.5px;top:1408.0px;font-size:19.87px;color:#93b6f2;font-weight:400;font-family:'Liberation Mono', monospace;"><span style="color:#f0a070;">7</span><span style="color:#93b6f2;">"&gt;</span></div><svg style="left:240.26600000000002px;top:1408.9999999999998px" width="26" height="17.5" viewBox="0 0 26 17.5"><rect x="0.6" y="0.6" width="24.8" height="16.3" rx="8.15" fill="none" stroke="#3f79b0" stroke-width="1.2"/><circle cx="7.5" cy="8.75" r="1.7" fill="#c7c7c7"/><circle cx="13.0" cy="8.75" r="1.7" fill="#c7c7c7"/><circle cx="18.5" cy="8.75" r="1.7" fill="#c7c7c7"/></svg><div class="t" style="left:271.3px;top:1408.0px;font-size:19.87px;color:#93b6f2;font-weight:400;font-family:'Liberation Mono', monospace;"><span style="color:#93b6f2;">&lt;/li&gt;</span></div><svg style="left:183.5px;top:1049.4px" width="14" height="8" viewBox="0 0 14 8"><path d="M0 0 H13.5 L6.75 7.5 Z" fill="#c7c7c7"/></svg><div class="t" style="left:200.5px;top:1045.2px;font-size:19.87px;color:#93b6f2;font-weight:400;font-family:'Liberation Mono', monospace;"><span style="color:#93b6f2;">&lt;li </span><span style="color:#cdd0fa;">tabindex</span><span style="color:#93b6f2;">="</span><span style="color:#f0a070;">-1</span><span style="color:#93b6f2;">" </span><span style="color:#cdd0fa;">aria-labelledby</span><span style="color:#93b6f2;">="</span><span style="color:#f0a070;">:r8a:--label  </span><span style="color:#93b6f2;">" </span><span style="color:#cdd0fa;">role</span><span style="color:#93b6f2;">="</span><span style="color:#f0a070;">group</span><span style="color:#93b6f2;">" </span><span style="color:#cdd0fa;">id</span><span style="color:#93b6f2;">="</span><span style="color:#f0a070;">:r8a:</span><span style="color:#93b6f2;">" </span><span style="color:#cdd0fa;">data-has-description</span><span style="color:#93b6f2;">="</span><span style="color:#f0a070;">false</span><span style="color:#93b6f2;">" </span><span style="color:#cdd0fa;">class</span><span style="color:#93b6f2;">="</span><span style="color:#f0a070;">prc-ActionList-ActionListItem-uq6I</span></div><div class="t" style="left:200.5px;top:1072.8px;font-size:19.87px;color:#93b6f2;font-weight:400;font-family:'Liberation Mono', monospace;"><span style="color:#f0a070;">7</span><span style="color:#93b6f2;">"&gt;</span></div><svg style="left:208px;top:1102.1px" width="8" height="13" viewBox="0 0 8 13"><path d="M0 0 L7.5 6.5 L0 13 Z" fill="#c7c7c7"/></svg><div class="t" style="left:223.5px;top:1101.9px;font-size:19.87px;color:#93b6f2;font-weight:400;font-family:'Liberation Mono', monospace;"><span style="color:#93b6f2;">&lt;div </span><span style="color:#cdd0fa;">class</span><span style="color:#93b6f2;">="</span><span style="color:#f0a070;">prc-ActionList-ActionListContent-sg9-x</span><span style="color:#93b6f2;">" </span><span style="color:#cdd0fa;">data-size</span><span style="color:#93b6f2;">="</span><span style="color:#f0a070;">medium</span><span style="color:#93b6f2;">"&gt;</span></div><svg style="left:1073px;top:1102.8999999999999px" width="26" height="17.5" viewBox="0 0 26 17.5"><rect x="0.6" y="0.6" width="24.8" height="16.3" rx="8.15" fill="none" stroke="#3f79b0" stroke-width="1.2"/><circle cx="7.5" cy="8.75" r="1.7" fill="#c7c7c7"/><circle cx="13.0" cy="8.75" r="1.7" fill="#c7c7c7"/><circle cx="18.5" cy="8.75" r="1.7" fill="#c7c7c7"/></svg><div class="t" style="left:1101.0px;top:1101.9px;font-size:19.87px;color:#93b6f2;font-weight:400;font-family:'Liberation Mono', monospace;"><span style="color:#93b6f2;">&lt;/div&gt;</span></div><div class="a" style="left:1178.5px;top:1099.5px;width:60px;height:24px;border:1.2px solid #3f79b0;border-radius:12px;background:#262626"></div><div class="t" style="left:1190.0px;top:1103.1px;font-size:17px;color:#e3e3e3;font-weight:400;font-family:'Liberation Mono', monospace;">grid</div><div class="t" style="left:196.0px;top:1132.0px;font-size:19.87px;color:#93b6f2;font-weight:400;font-family:'Liberation Mono', monospace;"><span style="color:#93b6f2;">&lt;/li&gt;</span></div><svg style="left:1862px;top:910px" width="30" height="34" viewBox="0 0 30 34"><circle cx="15" cy="20" r="13" fill="#262626" opacity="0.9"/><circle cx="17.5" cy="5" r="2.6" fill="#e8e8e8"/><path d="M5 11.5 L13 9.5 H21 V16 H19.5 V30 H17 V22 H16 V30 H13.5 V14 L6 13.5 Z" fill="#e8e8e8"/></svg><div class="a" style="left:1940px;top:875px;width:702px;height:537px;background:#282828;border-left:1px solid #474747"></div><div class="a" style="left:1941px;top:875px;width:701px;height:48.5px;background:#3c3c3c;border-bottom:1px solid #474747"></div><div class="t" style="left:1959.7px;top:889.3px;font-size:23px;color:#a8c7fa;font-weight:400;font-family:'Liberation Sans', sans-serif;-webkit-text-stroke:0.5px currentColor;">Styles</div><div class="a" style="left:1946px;top:920.5px;width:95px;height:3.5px;background:#a8c7fa;border-radius:3px 3px 0 0"></div><div class="t" style="left:2061.0px;top:889.3px;font-size:23px;color:#d2d2d2;font-weight:400;font-family:'Liberation Sans', sans-serif;-webkit-text-stroke:0.5px currentColor;">Computed</div><div class="t" style="left:2206.0px;top:889.3px;font-size:23px;color:#d2d2d2;font-weight:400;font-family:'Liberation Sans', sans-serif;-webkit-text-stroke:0.5px currentColor;">Layout</div><div class="t" style="left:2312.4px;top:889.3px;font-size:23px;color:#d2d2d2;font-weight:400;font-family:'Liberation Sans', sans-serif;-webkit-text-stroke:0.5px currentColor;">Event Listeners</div><div class="t" style="left:2508.7px;top:889.3px;font-size:23px;color:#d2d2d2;font-weight:400;font-family:'Liberation Sans', sans-serif;-webkit-text-stroke:0.5px currentColor;">DOM Breakpoints</div><div class="a" style="left:1941px;top:971px;width:681px;height:1px;background:#474747"></div><div class="a" style="left:1950px;top:930px;width:355px;height:35.5px;background:#3a3a3a;border-radius:18px"></div><svg style="left:1969px;top:938px" width="19" height="19" viewBox="0 0 19 19" fill="none" stroke="#c7c7c7" stroke-width="2.3" stroke-linejoin="round"><path d="M1.5 1.5 H17.5 L11 9.5 V17.5 H8 V9.5 Z"/></svg><div class="t" style="left:2002.0px;top:936.0px;font-size:23px;color:#c7c7c7;font-weight:400;font-family:'Liberation Sans', sans-serif;-webkit-text-stroke:0.5px currentColor;">Filter</div><svg style="left:2325px;top:936px" width="26" height="24" viewBox="0 0 26 24" fill="none" stroke="#c7c7c7" stroke-width="2.4"><path d="M3 8 L13 2 L23 8 L13 14 Z"/><path d="M3 15 L13 21 L23 15"/></svg><div class="t" style="left:2369.0px;top:937.8px;font-size:20px;color:#e3e3e3;font-weight:700;font-family:'Liberation Sans', sans-serif;letter-spacing:-0.6px;">:hov</div><div class="t" style="left:2423.5px;top:935.2px;font-size:23px;color:#c7c7c7;font-weight:400;font-family:'Liberation Sans', sans-serif;-webkit-text-stroke:0.5px currentColor;">.cls</div><svg style="left:2477px;top:935px" width="32" height="30" viewBox="0 0 32 30" fill="none" stroke="#c7c7c7" stroke-width="2.4"><path d="M12 1 V22 M1.5 11.5 H22.5"/><path d="M30 20 V28 H22 Z" fill="#c7c7c7" stroke="none"/></svg><svg style="left:2527px;top:933px" width="24" height="30" viewBox="0 0 24 30"><path d="M3 2.2 H21 V17 H3 Z" fill="none" stroke="#c7c7c7" stroke-width="2.4"/><path d="M3 12.5 H21 V18 H3 Z M13 2 V7.5 H15.5 V2 Z" fill="#c7c7c7"/><rect x="8.6" y="17" width="6.8" height="11.5" rx="3" fill="#c7c7c7"/></svg><svg style="left:2575px;top:934px" width="26" height="26" viewBox="0 0 26 26" fill="none" stroke="#c7c7c7" stroke-width="2.4"><rect x="1.5" y="1.5" width="23" height="23" rx="2"/><path d="M17 1.5 V24.5"/><path d="M6.5 7.5 L12.5 13 L6.5 18.5 Z" fill="#c7c7c7" stroke="none"/></svg><svg style="left:1955px;top:989.5px" width="17" height="20" viewBox="0 0 17 20"><rect x="0" y="0" width="17" height="20" rx="3" fill="#7cacf8"/><path d="M3 10.5 L6.8 14.5 L14 5" fill="none" stroke="#1f1f1f" stroke-width="2.6"/></svg><div class="t" style="left:1979.6px;top:989.9px;font-size:22.6px;color:#e3e3e3;font-weight:400;font-family:'Liberation Sans', sans-serif;">Emulate a focused page</div><svg style="left:2233px;top:988.5px" width="24" height="20" viewBox="0 0 24 20"><circle cx="11.5" cy="10" r="9" fill="none" stroke="#c7c7c7" stroke-width="1.8"/><path d="M8.3 7.6 C8.3 4.2 14.7 4.2 14.7 7.6 C14.7 10 11.5 10 11.5 12.6" fill="none" stroke="#c7c7c7" stroke-width="1.8"/><circle cx="11.5" cy="15.2" r="1.2" fill="#c7c7c7"/></svg><div class="t" style="left:1952.3px;top:1034.9px;font-size:23px;color:#9e9e9e;font-weight:400;font-family:'Liberation Sans', sans-serif;">Force element state</div><div class="a" style="left:1952px;top:1076.4px;width:20px;height:19.5px;border:2px solid #7b7b7b;border-radius:4px;background:#3a3a3a"></div><div class="t" style="left:1980.5px;top:1079.2px;font-size:19.87px;color:#e3e3e3;font-weight:400;font-family:'Liberation Mono', monospace;">:active</div><div class="a" style="left:2301.7px;top:1076.4px;width:20px;height:19.5px;border:2px solid #7b7b7b;border-radius:4px;background:#3a3a3a"></div><div class="t" style="left:2330.2px;top:1079.2px;font-size:19.87px;color:#e3e3e3;font-weight:400;font-family:'Liberation Mono', monospace;">:hover</div><div class="a" style="left:1952px;top:1108.8000000000002px;width:20px;height:19.5px;border:2px solid #7b7b7b;border-radius:4px;background:#3a3a3a"></div><div class="t" style="left:1980.5px;top:1111.6px;font-size:19.87px;color:#e3e3e3;font-weight:400;font-family:'Liberation Mono', monospace;">:focus</div><div class="a" style="left:2301.7px;top:1108.8000000000002px;width:20px;height:19.5px;border:2px solid #7b7b7b;border-radius:4px;background:#3a3a3a"></div><div class="t" style="left:2330.2px;top:1111.6px;font-size:19.87px;color:#e3e3e3;font-weight:400;font-family:'Liberation Mono', monospace;">:focus-within</div><div class="a" style="left:1952px;top:1141.2px;width:20px;height:19.5px;border:2px solid #7b7b7b;border-radius:4px;background:#3a3a3a"></div><div class="t" style="left:1980.5px;top:1144.0px;font-size:19.87px;color:#e3e3e3;font-weight:400;font-family:'Liberation Mono', monospace;">:focus-visible</div><div class="a" style="left:2301.7px;top:1141.2px;width:20px;height:19.5px;border:2px solid #7b7b7b;border-radius:4px;background:#3a3a3a"></div><div class="t" style="left:2330.2px;top:1144.0px;font-size:19.87px;color:#e3e3e3;font-weight:400;font-family:'Liberation Mono', monospace;">:target</div><svg style="left:1952px;top:1188.5px" width="12" height="14" viewBox="0 0 12 14"><path d="M0 0 L11.5 7 L0 14 Z" fill="#9e9e9e"/></svg><div class="t" style="left:1971.8px;top:1183.5px;font-size:23px;color:#9e9e9e;font-weight:400;font-family:'Liberation Sans', sans-serif;">Force specific element state</div><div class="a" style="left:1941px;top:1222px;width:681px;height:1px;background:#474747"></div><div class="t" style="left:1949.4px;top:1229.8px;font-size:19.87px;color:#e3e3e3;font-weight:400;font-family:'Liberation Mono', monospace;"><span style="color:#9e9e9e;">element.style</span><span style="color:#e3e3e3;"> {</span></div><div class="t" style="left:1949.4px;top:1258.4px;font-size:19.87px;color:#e3e3e3;font-weight:400;font-family:'Liberation Mono', monospace;">}</div><div class="a" style="left:1941px;top:1285px;width:681px;height:41px;background:#2d2d2d;border-top:1px solid #474747;border-bottom:1px solid #474747"></div><div class="t" style="left:1950.3px;top:1294.8px;font-size:23px;color:#e3e3e3;font-weight:400;font-family:'Liberation Sans', sans-serif;"><span style="color:#e3e3e3;">Layer </span><span style="color:#a8c7fa;text-decoration:underline;text-underline-offset:3px">primer-react</span></div><div class="t" style="left:1950.0px;top:1332.7px;font-size:19.87px;color:#e3e3e3;font-weight:400;font-family:'Liberation Mono', monospace;">.prc-components-Input-Ic-</div><div class="t" style="left:1950.0px;top:1356.5px;font-size:19.87px;color:#e3e3e3;font-weight:400;font-family:'Liberation Mono', monospace;">y8:focus {</div><div class="t" style="left:1981.0px;top:1383.1px;font-size:19.87px;color:#e3e3e3;font-weight:400;font-family:'Liberation Mono', monospace;"><span style="color:#7fc8f8;">outline</span><span style="color:#e3e3e3;">: </span></div><svg style="left:2087px;top:1383px" width="10" height="14" viewBox="0 0 10 14"><path d="M0 0 L9.5 7 L0 14 Z" fill="#c7c7c7"/></svg><div class="t" style="left:2107.8px;top:1383.1px;font-size:19.87px;color:#e3e3e3;font-weight:400;font-family:'Liberation Mono', monospace;">0;</div><div class="t" style="left:1950.0px;top:1410.3px;font-size:19.87px;color:#e3e3e3;font-weight:400;font-family:'Liberation Mono', monospace;">}</div><div class="t" style="right:28.3px;top:1335.5px;font-size:19.87px;color:#c7c7c7;font-weight:400;font-family:'Liberation Mono', monospace;text-decoration:underline;text-underline-offset:3px;">primer-reac…odule.css:1</div><div class="a" style="left:2622px;top:923.5px;width:1px;height:490px;background:#474747"></div><div class="a" style="left:2623px;top:980px;width:19px;height:229px;background:#ad8b63;border-top:1.5px dashed #222;border-bottom:1.5px dashed #222"></div><div class="a" style="left:2623px;top:1013.7px;width:19px;height:162.3px;background:#e4c78f"></div><div class="a" style="left:2623px;top:1045.3px;width:19px;height:98.5px;background:#b7c38b;border-top:1.5px dashed #222;border-bottom:1.5px dashed #222"></div><div class="a" style="left:2633px;top:1078px;width:12px;height:33.6px;background:#8fb4c4;border:1.5px solid #111"></div><div class="t" style="left:2622.5px;top:1019.1px;font-size:20px;color:#222;font-weight:400;font-family:'Liberation Sans', sans-serif;">er</div><div class="t" style="left:2622.5px;top:1051.1px;font-size:20px;color:#222;font-weight:400;font-family:'Liberation Sans', sans-serif;">ado</div><div class="t" style="left:2622.0px;top:1085.1px;font-size:20px;color:#222;font-weight:400;font-family:'Liberation Sans', sans-serif;">0</div><div class="a" style="left:2623px;top:1264.6px;width:20px;height:1px;background:#474747"></div><div class="a" style="left:2623px;top:1319.6px;width:20px;height:1px;background:#474747"></div><div class="a" style="left:2632px;top:1271px;width:35px;height:35px;border-radius:50%;background:#3a3a3a"></div><svg style="left:0;top:0" width="2642" height="1412" viewBox="0 0 2642 1412"><rect x="0.0" y="830.0" width="54.0" height="50.0" rx="1.0" fill="none" stroke="#f25353" stroke-width="8"/><rect x="110.0" y="823.7" width="128.2" height="55.6" rx="1.0" fill="none" stroke="#f25353" stroke-width="8"/><rect x="1942.6" y="879.8" width="102.1" height="47.7" rx="1.0" fill="none" stroke="#f25353" stroke-width="8"/><rect x="2364.0" y="924.0" width="56.2" height="49.9" rx="1.0" fill="none" stroke="#f25353" stroke-width="8"/><rect x="1952.0" y="977.6" width="326.0" height="53.1" rx="1.0" fill="none" stroke="#f25353" stroke-width="8"/><path d="M58.2 821.9 L184.5 734.2 L191.5 743.3 L220.6 695.8 L167.2 711.6 L174.2 720.7 L56.8 820.1 Z" fill="#f25353" stroke="#f25353" stroke-width="1" stroke-linejoin="round"/><path d="M335.3 713.2 L372.6 1020.8 L358.7 1022.7 L386.0 1070.4 L399.3 1017.1 L385.4 1019.0 L337.7 712.8 Z" fill="#f25353" stroke="#f25353" stroke-width="1" stroke-linejoin="round"/><path d="M258.0 888.1 L1882.9 911.2 L1882.8 923.5 L1934.0 904.0 L1883.2 883.5 L1883.1 895.7 L258.0 885.9 Z" fill="#f25353" stroke="#f25353" stroke-width="1" stroke-linejoin="round"/><path d="M2067.9 923.2 L2296.7 939.6 L2296.2 951.6 L2349.0 935.0 L2297.9 913.6 L2297.4 925.6 L2068.1 920.8 Z" fill="#f25353" stroke="#f25353" stroke-width="1" stroke-linejoin="round"/><path d="M2367.9 994.8 L2068.0 1027.0 L2066.2 1012.6 L2019.0 1038.5 L2071.1 1052.3 L2069.3 1037.9 L2368.1 997.2 Z" fill="#f25353" stroke="#f25353" stroke-width="1" stroke-linejoin="round"/></svg><svg style="left:0;top:0" width="2642" height="1412" viewBox="0 0 2642 1412"><path transform="translate(2288.7 1350)" d="M0 7 L6.5 6 M3.5 1 V21 L2 20 M0 15.5 L6.5 11.5 M8 2 H21 V7 H8 M8 2 V14 L6.5 22 M14.5 8 V22 M10 11 V16 H19 V11 M9.5 18 V22 H20 V18" fill="none" stroke="#1a1a1a" stroke-width="3.6" stroke-opacity="0.55"/><path transform="translate(2288.7 1350)" d="M0 7 L6.5 6 M3.5 1 V21 L2 20 M0 15.5 L6.5 11.5 M8 2 H21 V7 H8 M8 2 V14 L6.5 22 M14.5 8 V22 M10 11 V16 H19 V11 M9.5 18 V22 H20 V18" fill="none" stroke="#e6e6e6" stroke-width="2"/><path transform="translate(2314.0 1350)" d="M11 0.5 L0.5 9 M11 0.5 L21.5 9 M5 9 H17 M3 14 H19 M11 9 V22 M6 16.5 L7.5 20 M16 16.5 L14.5 20 M1 22 H21" fill="none" stroke="#1a1a1a" stroke-width="3.6" stroke-opacity="0.55"/><path transform="translate(2314.0 1350)" d="M11 0.5 L0.5 9 M11 0.5 L21.5 9 M5 9 H17 M3 14 H19 M11 9 V22 M6 16.5 L7.5 20 M16 16.5 L14.5 20 M1 22 H21" fill="none" stroke="#e6e6e6" stroke-width="2"/><path transform="translate(2339.4 1350)" d="M0 7 L6.5 6 M3.5 1 V21 L2 20 M0 15.5 L6.5 11.5 M8 5 H21 M14.5 1 V10 M9 10 H19 M10 12.5 H19 L9 22 M11.5 14 L21 22" fill="none" stroke="#1a1a1a" stroke-width="3.6" stroke-opacity="0.55"/><path transform="translate(2339.4 1350)" d="M0 7 L6.5 6 M3.5 1 V21 L2 20 M0 15.5 L6.5 11.5 M8 5 H21 M14.5 1 V10 M9 10 H19 M10 12.5 H19 L9 22 M11.5 14 L21 22" fill="none" stroke="#e6e6e6" stroke-width="2"/><path transform="translate(2363.9 1350)" d="M1 7 H21 M11 1 V22 M11 8 L1.5 19 M11 8 L21 19 M15.5 2 L17.5 4.5" fill="none" stroke="#1a1a1a" stroke-width="3.6" stroke-opacity="0.55"/><path transform="translate(2363.9 1350)" d="M1 7 H21 M11 1 V22 M11 8 L1.5 19 M11 8 L21 19 M15.5 2 L17.5 4.5" fill="none" stroke="#e6e6e6" stroke-width="2"/><path transform="translate(2389.0 1350)" d="M4 0.5 L5.5 2.5 M1 6 H8 L1 15 M5 10 V22 M6 12 L8.5 15 M10 9 H21 M15.5 2 V21 M9 21 H22" fill="none" stroke="#1a1a1a" stroke-width="3.6" stroke-opacity="0.55"/><path transform="translate(2389.0 1350)" d="M4 0.5 L5.5 2.5 M1 6 H8 L1 15 M5 10 V22 M6 12 L8.5 15 M10 9 H21 M15.5 2 V21 M9 21 H22" fill="none" stroke="#e6e6e6" stroke-width="2"/><path transform="translate(2414.9 1350)" d="M1 1.5 H21 M1.5 1.5 V21.5 H22 M6 6 L17 17 M17 6 L6 17" fill="none" stroke="#1a1a1a" stroke-width="3.6" stroke-opacity="0.55"/><path transform="translate(2414.9 1350)" d="M1 1.5 H21 M1.5 1.5 V21.5 H22 M6 6 L17 17 M17 6 L6 17" fill="none" stroke="#e6e6e6" stroke-width="2"/></svg><div class="t" style="left:2445.0px;top:1349.7px;font-size:26px;color:#e6e6e6;font-weight:400;font-family:'Liberation Sans', sans-serif;text-shadow:0 0 2px rgba(0,0,0,.7);">@ snoopylion</div>
</body></html>
